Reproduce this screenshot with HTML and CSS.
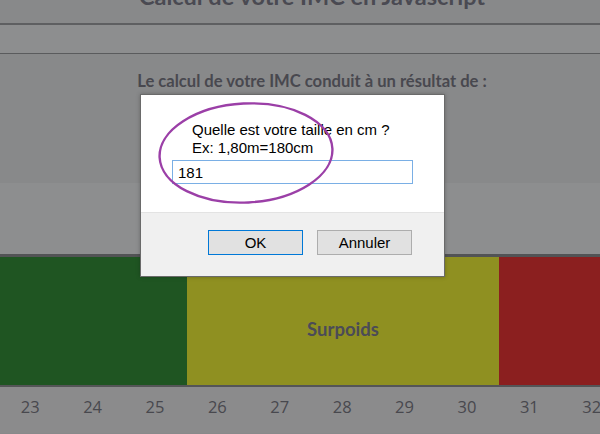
FILE: index.html
```html
<!DOCTYPE html>
<html>
  <head>
    <title>Calcul de votre IMC en Javascript</title>
    <meta charset="utf-8" />
    <link rel="stylesheet" href="styles.css">
  </head>
  <body>
    <div class="title">
      <h1>Calcul de votre IMC en Javascript</h1>
    </div>
    <div class="band"></div>
    <div class="result">
      <p>Le calcul de votre IMC conduit à un résultat de :</p>
    </div>
    <div class="band band-low"></div>
    <div class="scale">
      <div class="zone normal"></div>
      <div class="zone over">Surpoids</div>
      <div class="zone obese"></div>
    </div>
    <div class="ticks">
      <span>23</span><span>24</span><span>25</span><span>26</span><span>27</span>
      <span>28</span><span>29</span><span>30</span><span>31</span><span>32</span>
    </div>

    <!-- prompt() box, shown over the page -->
    <div class="prompt">
      <div class="prompt-body">
        <p>Quelle est votre taille en cm ?<br />Ex: 1,80m=180cm</p>
        <input type="text" value="181" />
      </div>
      <div class="prompt-buttons">
        <button class="default">OK</button>
        <button>Annuler</button>
      </div>
    </div>
    <svg class="circle" width="200" height="120" viewBox="0 0 200 120">
      <ellipse cx="100" cy="60" rx="86.5" ry="49.5" transform="rotate(-3 100 60)"
        fill="none" stroke="#9b3fa7" stroke-width="2.4" />
    </svg>
  </body>
</html>
```

FILE: styles.css
```css
body {
  margin: 0;
  background: #88898a;
  font: 16px "Open Sans", sans-serif;
  color: #47474f;
  overflow: hidden;
}

.title {
  height: 23px;
  overflow: hidden;
  border-bottom: 2px solid #5e5f61;
  text-align: center;
}

h1 {
  font: bold 23.5px/30px Lato, sans-serif;
  margin: -19px 0 0 24px;
  color: #4a4a52;
}

.band {
  height: 28px;
  background: #8d8e8f;
  border-bottom: 1px solid #5a5b5d;
}

.band-low {
  height: 71px;
  border-bottom: 3px solid #525355;
}

.result {
  height: 129px;
  text-align: center;
}

.result p {
  margin: 0;
  padding: 17px 0 0 24px;
  font: bold 16.6px/20px Lato, sans-serif;
  color: #48484f;
}

.scale {
  display: flex;
  height: 128px;
  border-bottom: 2px solid #545557;
}

.zone {
  display: flex;
  align-items: center;
  justify-content: center;
  font: bold 18.5px Lato, sans-serif;
  color: #4b4b57;
}

.normal {
  width: 187px;
  background: #1f5522;
}

.over {
  width: 312px;
  background: #8f9021;
  padding-top: 16px;
  box-sizing: border-box;
}

.obese {
  flex: 1;
  background: #8b1f1f;
}

.ticks {
  display: flex;
  margin-left: -1px;
  padding-top: 8px;
  height: 38px;
  background: #8b8b8c;
}

.ticks span {
  flex: none;
  width: 62.4px;
  text-align: center;
  font-size: 16.5px;
  color: #48484e;
}

.prompt {
  position: absolute;
  left: 140px;
  top: 94px;
  width: 303px;
  border: 1px solid #6a6a6a;
  background: #f0f0f0;
  box-shadow: 0 0 4px rgba(0, 0, 0, 0.25);
  font: 15px "Liberation Sans", Arial, sans-serif;
  color: #000;
}

.prompt-body {
  background: #fff;
  height: 118px;
  padding: 26px 0 0 31px;
  box-sizing: border-box;
  border-bottom: 1px solid #e3e3e3;
}

.prompt-body p {
  margin: 0 0 0 20px;
  line-height: 18px;
}

.prompt-body input {
  display: block;
  margin-top: 3px;
  width: 241px;
  height: 24px;
  box-sizing: border-box;
  border: 1px solid #7aafe5;
  padding: 0 5px;
  font: 15px "Liberation Sans", Arial, sans-serif;
  outline: none;
}

.prompt-buttons {
  display: flex;
  gap: 14px;
  padding: 17px 0 21px 67px;
}

.prompt-buttons button {
  width: 95px;
  height: 25px;
  background: #e1e1e1;
  border: 1px solid #adadad;
  font: 15px "Liberation Sans", Arial, sans-serif;
  color: #000;
  padding: 0;
}

.prompt-buttons .default {
  border-color: #0078d7;
}

.circle {
  position: absolute;
  left: 146px;
  top: 93px;
}
```
